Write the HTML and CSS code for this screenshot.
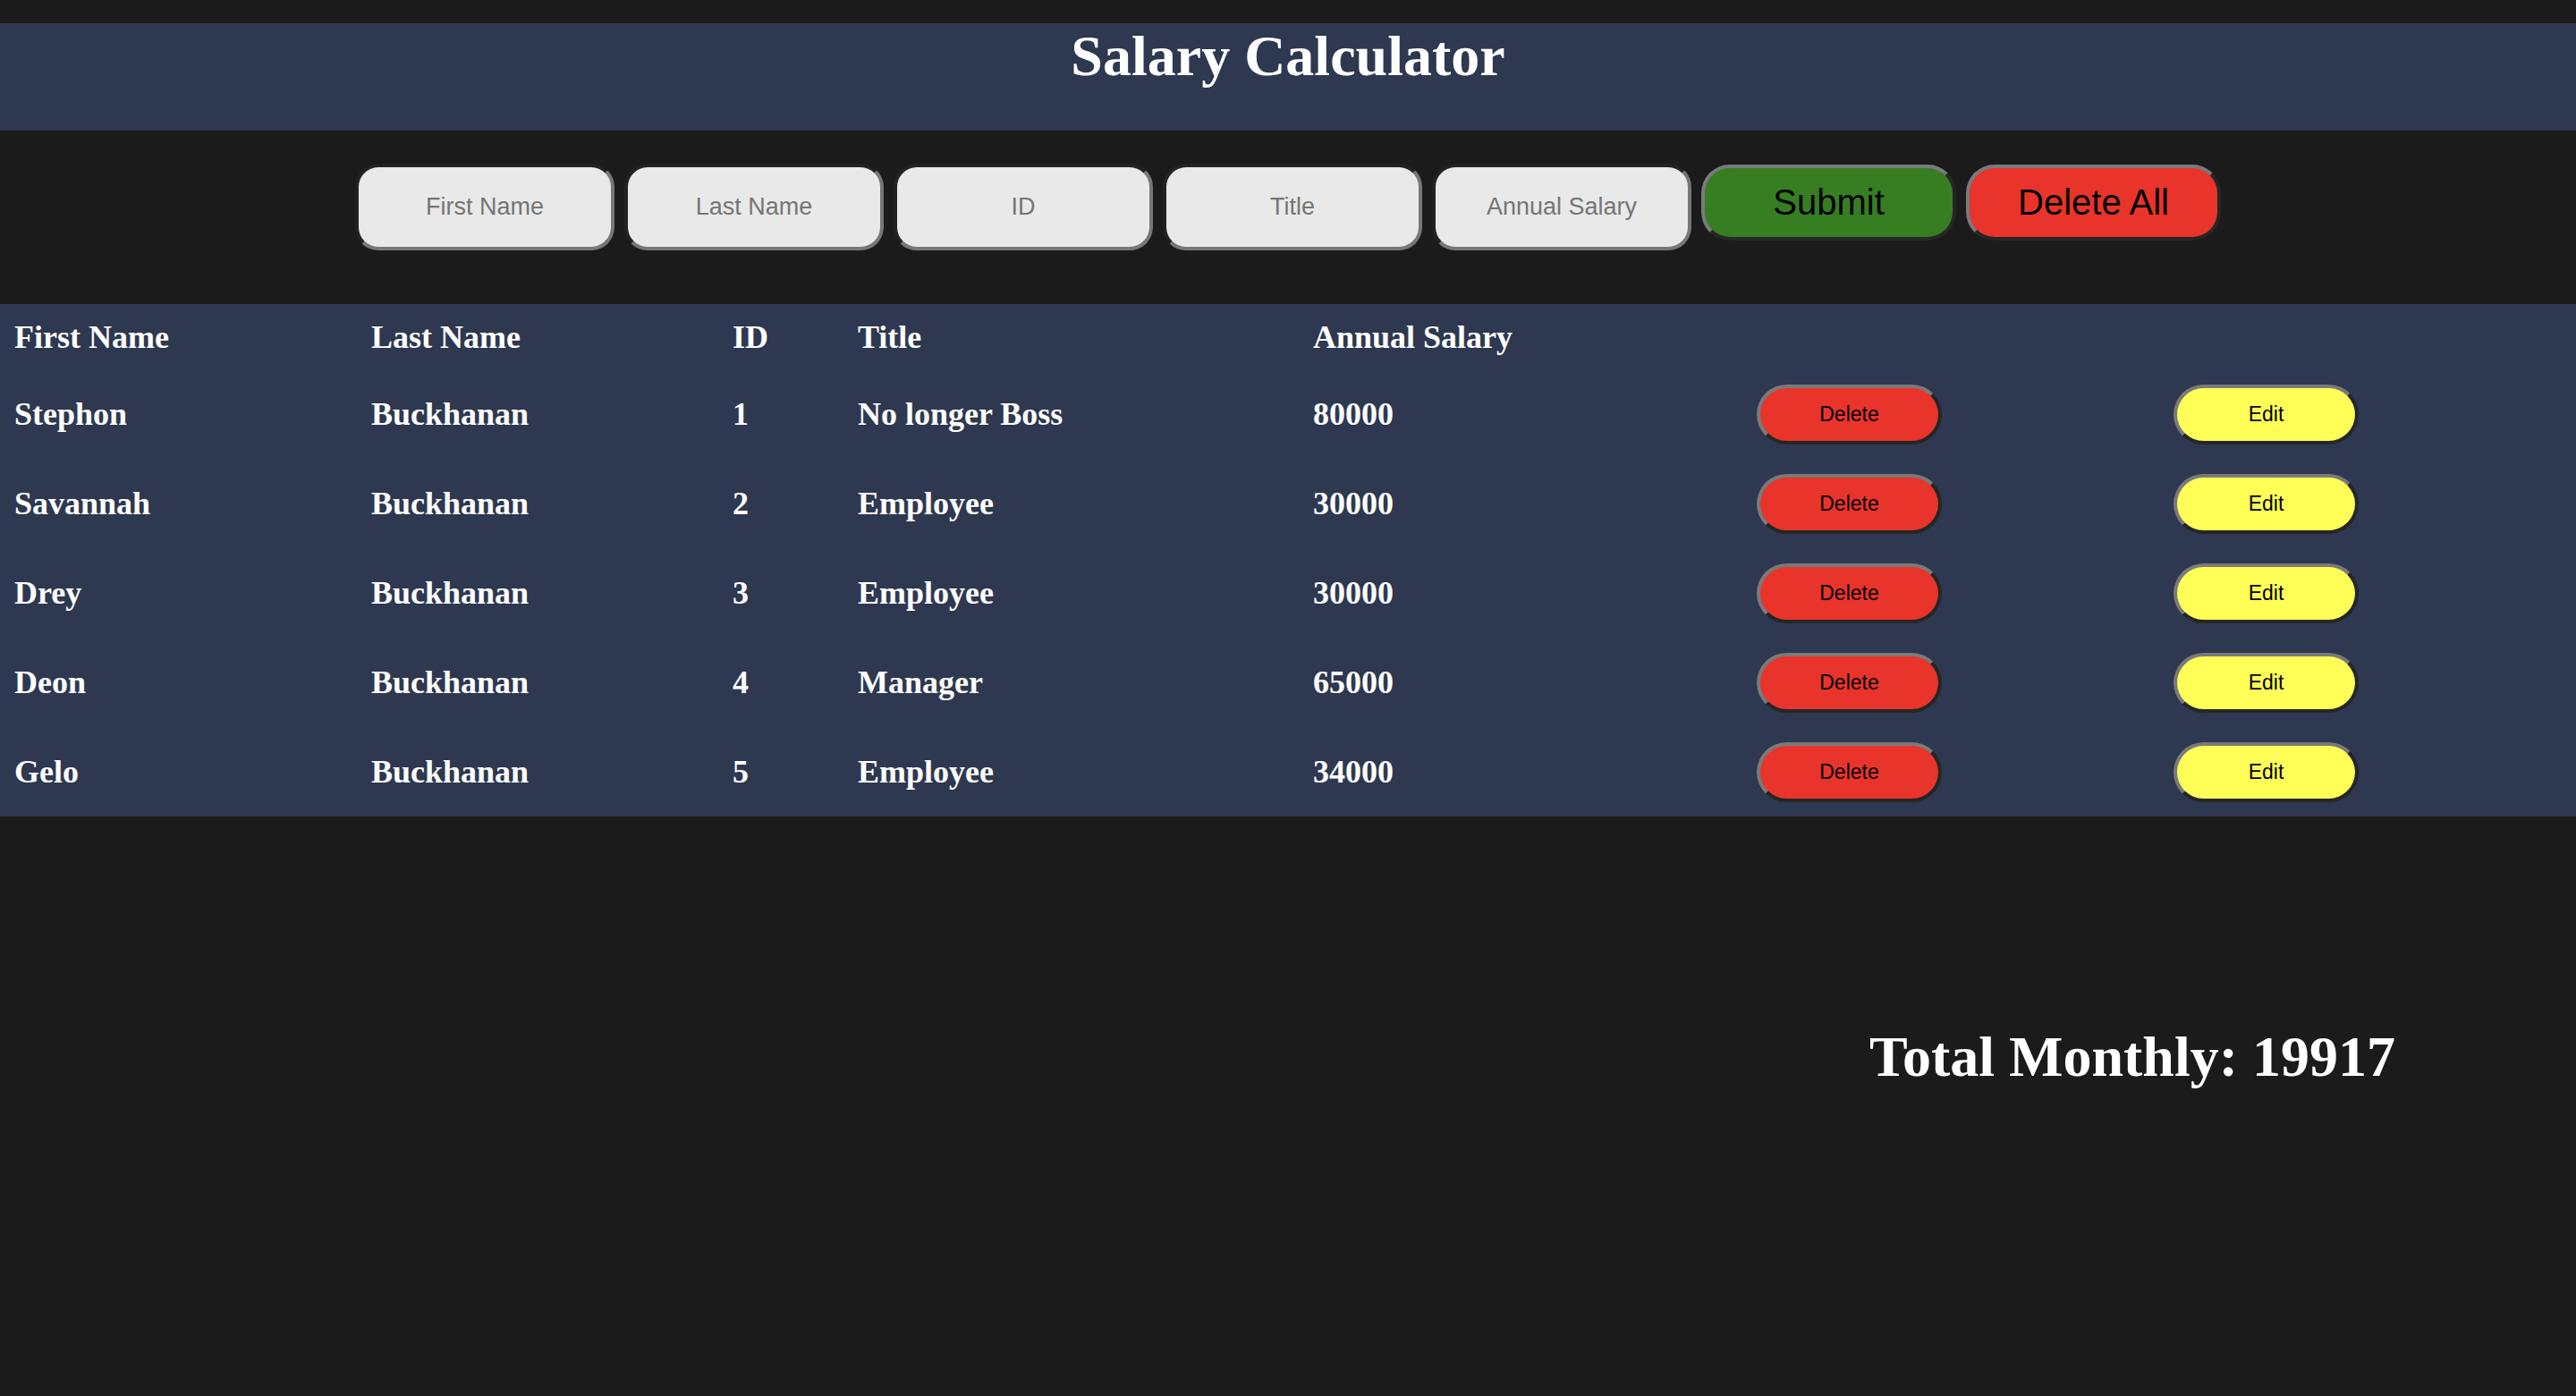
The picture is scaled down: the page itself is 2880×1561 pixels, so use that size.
FILE: index.html
```html
<!DOCTYPE html>
<html lang="en">
<head>
<meta charset="utf-8">
<title>Salary Calculator</title>
<link rel="stylesheet" href="styles.css">
</head>
<body>
<header class="banner">
  <h1 class="banner-title">Salary Calculator</h1>
</header>
<form class="entry">
  <input class="field" type="text" placeholder="First Name">
  <input class="field" type="text" placeholder="Last Name">
  <input class="field" type="text" placeholder="ID">
  <input class="field" type="text" placeholder="Title">
  <input class="field" type="text" placeholder="Annual Salary">
  <button class="big-btn submit" type="button">Submit</button>
  <button class="big-btn delete-all" type="button">Delete All</button>
</form>
<table class="staff">
  <colgroup>
    <col class="c-first"><col class="c-last"><col class="c-id"><col class="c-title"><col class="c-salary"><col class="c-act"><col class="c-act">
  </colgroup>
  <thead>
    <tr class="head-row"><th>First Name</th><th>Last Name</th><th>ID</th><th>Title</th><th>Annual Salary</th><th></th><th></th></tr>
  </thead>
  <tbody>
    <tr><td>Stephon</td><td>Buckhanan</td><td>1</td><td>No longer Boss</td><td>80000</td><td><button class="row-btn del" type="button">Delete</button></td><td><button class="row-btn edit" type="button">Edit</button></td></tr>
    <tr><td>Savannah</td><td>Buckhanan</td><td>2</td><td>Employee</td><td>30000</td><td><button class="row-btn del" type="button">Delete</button></td><td><button class="row-btn edit" type="button">Edit</button></td></tr>
    <tr><td>Drey</td><td>Buckhanan</td><td>3</td><td>Employee</td><td>30000</td><td><button class="row-btn del" type="button">Delete</button></td><td><button class="row-btn edit" type="button">Edit</button></td></tr>
    <tr><td>Deon</td><td>Buckhanan</td><td>4</td><td>Manager</td><td>65000</td><td><button class="row-btn del" type="button">Delete</button></td><td><button class="row-btn edit" type="button">Edit</button></td></tr>
    <tr><td>Gelo</td><td>Buckhanan</td><td>5</td><td>Employee</td><td>34000</td><td><button class="row-btn del" type="button">Delete</button></td><td><button class="row-btn edit" type="button">Edit</button></td></tr>
  </tbody>
</table>
<div class="total-wrap">
  <h2 class="total">Total Monthly: 19917</h2>
</div>
</body>
</html>
```
FILE: styles.css
```css
html, body {
  margin: 0;
  background: #1b1b1b;
}
body {
  padding-top: 26px;
  font-family: "Liberation Serif", "Times New Roman", serif;
  color: #fff;
}
.banner {
  background: #2e3850;
  height: 120px;
}
.banner-title {
  margin: 0;
  font-size: 64px;
  font-weight: bold;
  text-align: center;
  line-height: normal;
  color: #fff;
}
.entry {
  display: flex;
  justify-content: center;
  align-items: baseline;
  gap: 11px;
  margin: 37px 0 0;
}
.field {
  box-sizing: border-box;
  width: 290px;
  height: 97px;
  border-radius: 26px;
  border: 4px solid;
  border-color: #222 #777 #777 #222;
  background: #e9e9e9;
  font-family: "Liberation Sans", Arial, sans-serif;
  font-size: 27px;
  text-align: center;
  color: #111;
  padding: 0;
  outline: none;
}
.field::placeholder {
  color: #757575;
}
.big-btn {
  box-sizing: border-box;
  width: 285px;
  height: 85px;
  border-radius: 32px;
  border: 4px solid;
  border-color: #7a7a7a #262626 #262626 #7a7a7a;
  font-family: "Liberation Sans", Arial, sans-serif;
  font-size: 40px;
  color: #000;
  padding: 0;
}
.submit { background: #377d22; }
.delete-all { background: #e8342a; }
.staff {
  margin-top: 60px;
  width: 100%;
  table-layout: fixed;
  border-collapse: collapse;
  background: #2e3850;
}
.c-first { width: 399px; }
.c-last { width: 404px; }
.c-id { width: 140px; }
.c-title { width: 509px; }
.c-salary { width: 496px; }
.c-act { width: 466px; }
.staff th, .staff td {
  padding: 0 16px;
  text-align: left;
  vertical-align: middle;
  font-size: 36px;
  font-weight: bold;
  color: #fff;
  white-space: nowrap;
}
.head-row { height: 73px; }
.staff tbody tr { height: 100px; }
.row-btn {
  box-sizing: border-box;
  width: 207px;
  height: 67px;
  border-radius: 34px;
  border: 4px solid;
  border-color: #7a7a7a #262626 #262626 #7a7a7a;
  font-family: "Liberation Sans", Arial, sans-serif;
  font-size: 23px;
  color: #000;
  padding: 0;
  display: block;
}
.del { background: #e8342a; }
.edit { background: #ffff57; }
.total-wrap {
  display: flex;
  justify-content: flex-end;
  padding-right: 202px;
  margin-top: 232px;
}
.total {
  margin: 0;
  font-size: 64px;
  font-weight: bold;
  line-height: normal;
  color: #fff;
}
```
